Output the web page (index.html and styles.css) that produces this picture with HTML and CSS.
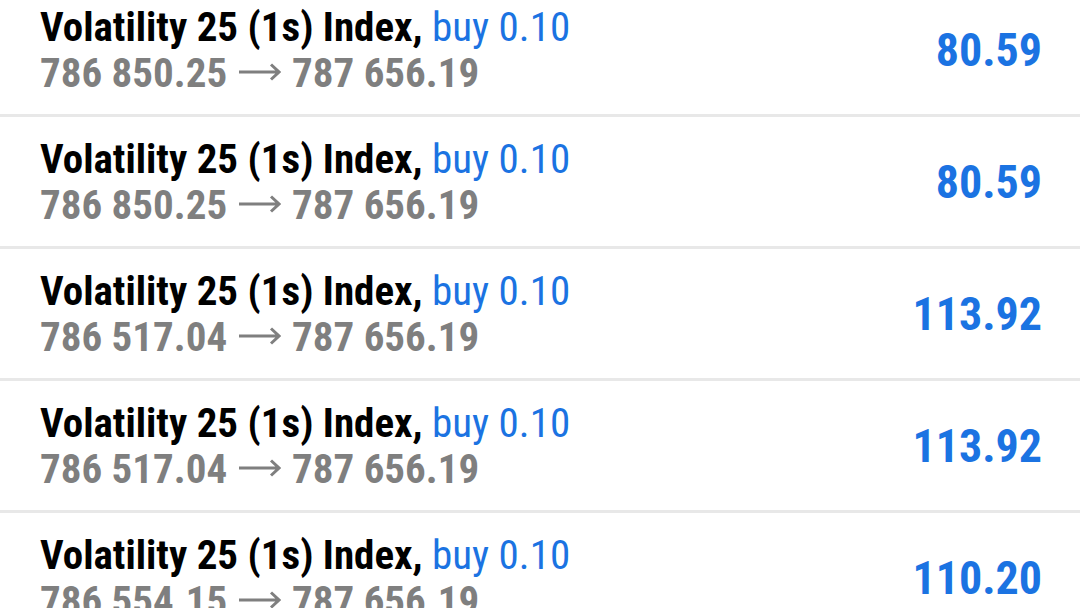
FILE: index.html
```html
<!DOCTYPE html>
<html lang="en">
<head>
    <meta charset="utf-8"/>
    <title>Trade history</title>
    <link rel="stylesheet" href="styles.css">
</head>
<body>
    <ul class="deals">
        <li class="deal">
            <div class="deal-info">
                <div class="deal-title">Volatility 25 (1s) Index, <span class="deal-side">buy 0.10</span></div>
                <div class="deal-prices">786 850.25 <svg class="arrow" viewBox="0 0 42 20" role="img" aria-label="to"><path d="M0 10H40M32 2.5L40 10L32 17.5"/></svg> 787 656.19</div>
            </div>
            <div class="deal-profit">80.59</div>
        </li>
        <li class="deal">
            <div class="deal-info">
                <div class="deal-title">Volatility 25 (1s) Index, <span class="deal-side">buy 0.10</span></div>
                <div class="deal-prices">786 850.25 <svg class="arrow" viewBox="0 0 42 20" role="img" aria-label="to"><path d="M0 10H40M32 2.5L40 10L32 17.5"/></svg> 787 656.19</div>
            </div>
            <div class="deal-profit">80.59</div>
        </li>
        <li class="deal">
            <div class="deal-info">
                <div class="deal-title">Volatility 25 (1s) Index, <span class="deal-side">buy 0.10</span></div>
                <div class="deal-prices">786 517.04 <svg class="arrow" viewBox="0 0 42 20" role="img" aria-label="to"><path d="M0 10H40M32 2.5L40 10L32 17.5"/></svg> 787 656.19</div>
            </div>
            <div class="deal-profit">113.92</div>
        </li>
        <li class="deal">
            <div class="deal-info">
                <div class="deal-title">Volatility 25 (1s) Index, <span class="deal-side">buy 0.10</span></div>
                <div class="deal-prices">786 517.04 <svg class="arrow" viewBox="0 0 42 20" role="img" aria-label="to"><path d="M0 10H40M32 2.5L40 10L32 17.5"/></svg> 787 656.19</div>
            </div>
            <div class="deal-profit">113.92</div>
        </li>
        <li class="deal">
            <div class="deal-info">
                <div class="deal-title">Volatility 25 (1s) Index, <span class="deal-side">buy 0.10</span></div>
                <div class="deal-prices">786 554.15 <svg class="arrow" viewBox="0 0 42 20" role="img" aria-label="to"><path d="M0 10H40M32 2.5L40 10L32 17.5"/></svg> 787 656.19</div>
            </div>
            <div class="deal-profit">110.20</div>
        </li>
    </ul>
</body>
</html>
```

FILE: styles.css
```css
html, body {
    margin: 0;
    padding: 0;
    background: #fff;
    overflow: hidden;
}

body {
    font-family: Roboto, "Liberation Sans", sans-serif;
    font-stretch: 75%;
}

.deals {
    list-style: none;
    margin: -15px 0 0 0;
    padding: 0;
}

.deal {
    display: flex;
    align-items: center;
    justify-content: space-between;
    height: 129px;
    padding: 0 38px 0 40px;
    border-bottom: 3px solid #e8e8e8;
}

.deal-title,
.deal-prices {
    font-size: 41px;
    line-height: 46px;
    white-space: nowrap;
}

.deal-title {
    font-weight: 700;
    color: #000;
}

.deal-side {
    font-weight: 400;
    color: #1b73e2;
}

.deal-prices {
    font-weight: 700;
    color: #7f7f7f;
}

.arrow {
    width: 42px;
    height: 20px;
    margin: 0 2px;
    vertical-align: 5px;
    fill: none;
    stroke: #7f7f7f;
    stroke-width: 3;
}

.deal-profit {
    font-size: 46px;
    font-weight: 700;
    color: #1b73e2;
}
```
